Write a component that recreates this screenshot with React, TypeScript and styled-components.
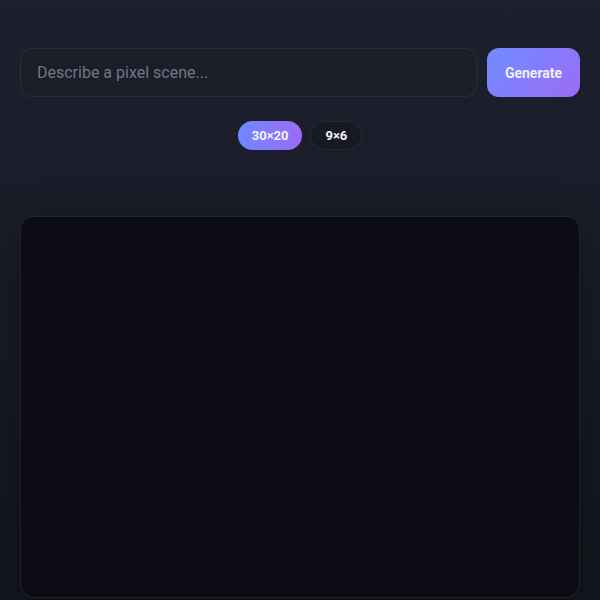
import React from "react";
import styled, { createGlobalStyle } from "styled-components";

const Global = createGlobalStyle`
  html, body { margin: 0; padding: 0; }
  body {
    background: linear-gradient(180deg, #1c1f2d 0%, #1a1c28 40%, #14161e 100%);
    min-height: 600px;
    font-family: Roboto, "Noto Sans", "Liberation Sans", sans-serif;
    color: #e6e7ee;
  }
`;

const Page = styled.div`
  display: flex;
  flex-direction: column;
  padding: 48px 20px 0;
  min-height: 600px;
  box-sizing: border-box;
`;

const Row = styled.div`
  display: flex;
  gap: 10px;
  height: 49px;
`;

const Input = styled.input`
  flex: 1;
  min-width: 0;
  box-sizing: border-box;
  height: 49px;
  border-radius: 12px;
  border: 1px solid rgba(255, 255, 255, 0.07);
  background: #1b1d29;
  padding: 0 16px;
  font-family: inherit;
  font-size: 16px;
  color: #e6e7ee;
  outline: none;
  &::placeholder { color: #737685; }
`;

const GenerateButton = styled.button`
  width: 93px;
  height: 49px;
  border: none;
  border-radius: 12px;
  background: linear-gradient(135deg, #6f8cff 0%, #9b6cf6 100%);
  color: #f1efff;
  font-family: inherit;
  font-weight: 700;
  font-size: 14px;
  cursor: pointer;
`;

const Pills = styled.div`
  display: flex;
  justify-content: center;
  gap: 8px;
  margin-top: 24px;
`;

const Pill = styled.button<{ $active?: boolean }>`
  height: 29px;
  padding: 0 14px;
  border-radius: 999px;
  font-family: inherit;
  font-weight: 700;
  font-size: 13px;
  color: #f3f2ff;
  border: ${(p) => (p.$active ? "none" : "1px solid rgba(255,255,255,0.07)")};
  background: ${(p) =>
    p.$active ? "linear-gradient(90deg, #7088ff 0%, #9c6bf6 100%)" : "#171923"};
  cursor: pointer;
`;

const Canvas = styled.div`
  margin-top: 66px;
  height: 382px;
  box-sizing: border-box;
  border-radius: 14px;
  border: 1px solid rgba(255, 255, 255, 0.1);
  background: #0b0c13;
  box-shadow: 0 10px 40px rgba(0, 0, 0, 0.35);
`;

export default function App() {
  return (
    <>
      <Global />
      <Page>
        <Row>
          <Input placeholder="Describe a pixel scene..." />
          <GenerateButton>Generate</GenerateButton>
        </Row>
        <Pills>
          <Pill $active>30×20</Pill>
          <Pill>9×6</Pill>
        </Pills>
        <Canvas />
      </Page>
    </>
  );
}
